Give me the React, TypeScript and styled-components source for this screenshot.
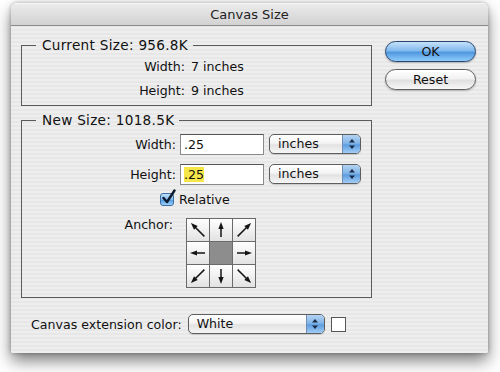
import styled, { createGlobalStyle } from 'styled-components';

const GlobalStyle = createGlobalStyle`
  html, body {
    margin: 0;
    padding: 0;
    background: #fff;
  }
  body {
    font-family: "DejaVu Sans", "Lucida Grande", sans-serif;
    font-size: 12.6px;
    color: #111;
  }
`;

type ArrowDir = 'nw' | 'n' | 'ne' | 'w' | 'c' | 'e' | 'sw' | 's' | 'se';

const ANGLES: Record<ArrowDir, number> = {
  n: 0, ne: 45, e: 90, se: 135, s: 180, sw: 225, w: 270, nw: 315, c: 0,
};

const ANCHOR: ArrowDir[] = ['nw', 'n', 'ne', 'w', 'c', 'e', 'sw', 's', 'se'];

function App() {
  return (
    <Page>
      <GlobalStyle />
      <Window>
        <TitleBar>Canvas Size</TitleBar>
        <Body>
          <LeftCol>
            <Group>
              <Legend>Current Size: 956.8K</Legend>
              <InfoRow>
                <Label $width={163}>Width:</Label>
                <Value>7 inches</Value>
              </InfoRow>
              <InfoRow>
                <Label $width={163}>Height:</Label>
                <Value>9 inches</Value>
              </InfoRow>
            </Group>

            <Group $bottom={9}>
              <Legend>New Size: 1018.5K</Legend>
              <FieldRow>
                <Label $width={154}>Width:</Label>
                <TextInput>.25</TextInput>
                <Select $width={92}>
                  <SelectText>inches</SelectText>
                  <Stepper><StepArrows /></Stepper>
                </Select>
              </FieldRow>
              <FieldRow>
                <Label $width={154}>Height:</Label>
                <TextInput><Selected>.25</Selected></TextInput>
                <Select $width={92}>
                  <SelectText>inches</SelectText>
                  <Stepper><StepArrows /></Stepper>
                </Select>
              </FieldRow>
              <CheckRow>
                <CheckBox>
                  <svg width="17" height="17" viewBox="0 0 17 17">
                    <path d="M3.5 9 L7 13 L14.5 1.5" fill="none" stroke="#0e1a2e" strokeWidth="2.4" strokeLinecap="round" strokeLinejoin="round" />
                  </svg>
                </CheckBox>
                <span>Relative</span>
              </CheckRow>
              <AnchorRow>
                <Label $width={151}>Anchor:</Label>
                <AnchorGrid>
                  {ANCHOR.map((dir) => (
                    <AnchorCell key={dir} $center={dir === 'c'}>
                      {dir !== 'c' && <Arrow angle={ANGLES[dir]} diagonal={dir.length === 2} />}
                    </AnchorCell>
                  ))}
                </AnchorGrid>
              </AnchorRow>
            </Group>

            <BottomRow>
              <span>Canvas extension color:</span>
              <Select $width={137}>
                <SelectText>White</SelectText>
                <Stepper><StepArrows /></Stepper>
              </Select>
              <Swatch />
            </BottomRow>
          </LeftCol>

          <RightCol>
            <AquaButton $primary>OK</AquaButton>
            <AquaButton>Reset</AquaButton>
          </RightCol>
        </Body>
      </Window>
    </Page>
  );
}

function StepArrows() {
  return (
    <svg width="8" height="12" viewBox="0 0 8 12">
      <path d="M4 1 L7 4.5 L1 4.5 Z" fill="#1b2a44" />
      <path d="M4 11 L7 7.5 L1 7.5 Z" fill="#1b2a44" />
    </svg>
  );
}

function Arrow({ angle, diagonal }: { angle: number; diagonal: boolean }) {
  const len = diagonal ? 10 : 8;
  return (
    <svg width="22" height="22" viewBox="0 0 22 22">
      <g transform={`rotate(${angle} 11 11)`}>
        <line x1="11" y1={11 + len - 1} x2="11" y2={11 - len + 5} stroke="#151515" strokeWidth="1.5" />
        <path d={`M11 ${11 - len} L13.6 ${11 - len + 7} L8.4 ${11 - len + 7} Z`} fill="#151515" />
      </g>
    </svg>
  );
}

const Page = styled.div`
  width: 500px;
  height: 372px;
  padding: 3px 0 0 11px;
  box-sizing: border-box;
  background: #fff;
  overflow: hidden;
`;

const Window = styled.div`
  width: 477px;
  height: 350px;
  border-radius: 6px 6px 2px 2px;
  background: repeating-linear-gradient(to bottom, #eeeeee 0, #eeeeee 2px, #e7e7e7 2px, #e7e7e7 4px);
  box-shadow: 0 8px 16px rgba(0, 0, 0, 0.5), 0 0 4px rgba(0, 0, 0, 0.3);
  display: flex;
  flex-direction: column;
  overflow: hidden;
`;

const TitleBar = styled.div`
  height: 21px;
  line-height: 21px;
  text-align: center;
  font-size: 13px;
  color: #222;
  background: linear-gradient(to bottom, #ebebeb, #d2d2d2);
  border-bottom: 1px solid #8a8a8a;
  border-top: 1px solid #f6f6f6;
`;

const Body = styled.div`
  display: flex;
  flex: 1;
  padding: 11px 0 0 10px;
`;

const LeftCol = styled.div`
  width: 351px;
  display: flex;
  flex-direction: column;
`;

const RightCol = styled.div`
  display: flex;
  flex-direction: column;
  gap: 7px;
  margin-left: 13px;
  padding-top: 4px;
`;

const Group = styled.fieldset<{ $bottom?: number }>`
  margin: 0 0 6px 0;
  padding: 1px 0 ${(p) => p.$bottom ?? 3}px 0;
  border: 1px solid #5a5a5a;
  min-width: 0;
`;

const Legend = styled.legend`
  margin-left: 14px;
  padding: 0 5px 0 6px;
  line-height: 16px;
  font-family: "DejaVu Sans", "Lucida Grande", sans-serif;
  font-size: 13.6px;
  letter-spacing: 0.3px;
`;

const InfoRow = styled.div`
  display: flex;
  align-items: center;
  height: 24px;
`;

const FieldRow = styled.div`
  display: flex;
  align-items: center;
  height: 30px;
`;

const Label = styled.span<{ $width: number }>`
  width: ${(p) => p.$width}px;
  text-align: right;
  flex-shrink: 0;
`;

const Value = styled.span`
  margin-left: 6px;
`;

const TextInput = styled.div`
  width: 84px;
  height: 21px;
  box-sizing: border-box;
  margin-left: 4px;
  padding-left: 3px;
  background: #fff;
  border: 1px solid #8a8a8a;
  border-top-color: #555;
  line-height: 19px;
`;

const Selected = styled.span`
  background: #f6e64a;
`;

const Select = styled.div<{ $width: number }>`
  width: ${(p) => p.$width}px;
  height: 20px;
  box-sizing: border-box;
  margin-left: 5px;
  display: flex;
  border: 1px solid #5e5e5e;
  border-radius: 5px;
  overflow: hidden;
  background: linear-gradient(to bottom, #ffffff 0%, #f4f4f4 45%, #e2e2e2 55%, #f6f6f6 100%);
  box-shadow: 0 1px 1px rgba(0, 0, 0, 0.15);
`;

const SelectText = styled.span`
  flex: 1;
  padding-left: 8px;
  line-height: 18px;
`;

const Stepper = styled.span`
  width: 17px;
  display: flex;
  align-items: center;
  justify-content: center;
  border-left: 1px solid #6f8db5;
  background: linear-gradient(to bottom, #b3d3f3 0%, #84b6e8 45%, #5c9ddf 55%, #a3cdf5 100%);
`;

const CheckRow = styled.div`
  display: flex;
  align-items: center;
  height: 20px;
  padding-left: 138px;
  gap: 5px;
`;

const CheckBox = styled.span`
  position: relative;
  width: 14px;
  height: 13px;
  box-sizing: border-box;
  border: 1px solid #3a6ea5;
  border-radius: 3px;
  background: linear-gradient(to bottom, #bfe0fb 0%, #7fb8ec 50%, #4f9be0 55%, #9fd0fa 100%);

  svg {
    position: absolute;
    left: -1px;
    top: -5px;
  }
`;

const AnchorRow = styled.div`
  display: flex;
  align-items: flex-start;
  margin-top: 9px;

  ${Label} {
    line-height: 13px;
  }
`;

const AnchorGrid = styled.div`
  margin-left: 13px;
  display: grid;
  grid-template-columns: repeat(3, 22px);
  grid-auto-rows: 22px;
  gap: 1px;
  padding: 1px;
  background: #6a6a6a;
  width: max-content;
`;

const AnchorCell = styled.div<{ $center: boolean }>`
  display: flex;
  align-items: center;
  justify-content: center;
  background: ${(p) => (p.$center ? '#8d8d8d' : 'linear-gradient(to bottom, #ffffff, #e2e2e2)')};
`;

const BottomRow = styled.div`
  display: flex;
  align-items: center;
  margin-top: 10px;
  padding-left: 10px;

  ${Select} {
    margin-left: 6px;
  }
`;

const Swatch = styled.span`
  width: 13px;
  height: 13px;
  margin-left: 6px;
  background: #fff;
  border: 1px solid #555;
`;

const AquaButton = styled.button<{ $primary?: boolean }>`
  width: 91px;
  height: 21px;
  padding: 0;
  border-radius: 11px;
  font-family: inherit;
  font-size: 12.6px;
  color: #111;
  border: 1px solid ${(p) => (p.$primary ? '#27466f' : '#5e5e5e')};
  background: ${(p) =>
    p.$primary
      ? 'linear-gradient(to bottom, #c6e2fa 0%, #82baee 45%, #4f98e0 55%, #8fccfa 100%)'
      : 'linear-gradient(to bottom, #ffffff 0%, #f2f2f2 45%, #e0e0e0 55%, #f8f8f8 100%)'};
  box-shadow: 0 1px 2px rgba(0, 0, 0, 0.25);
`;

export default App;
